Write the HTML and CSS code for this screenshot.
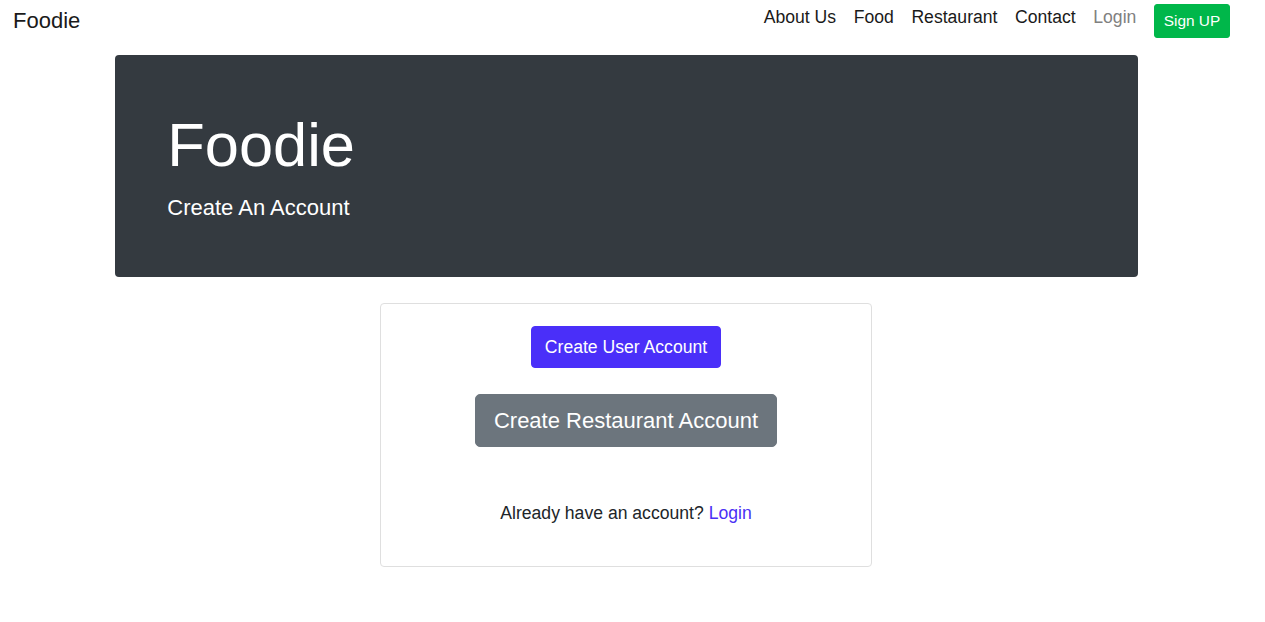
FILE: index.html
```html
<!DOCTYPE html>
<html lang="en">
<head>
<meta charset="utf-8">
<title>Foodie</title>
<link rel="stylesheet" href="styles.css">
</head>
<body>
<nav class="navbar">
  <a class="brand" href="#">Foodie</a>
  <ul class="nav">
    <li><a class="nav-link" href="#">About Us</a></li>
    <li><a class="nav-link" href="#">Food</a></li>
    <li><a class="nav-link" href="#">Restaurant</a></li>
    <li><a class="nav-link" href="#">Contact</a></li>
    <li><a class="nav-link muted" href="#">Login</a></li>
    <li><a class="btn-signup" href="#">Sign UP</a></li>
  </ul>
</nav>
<main class="page">
  <section class="jumbotron">
    <h1 class="display">Foodie</h1>
    <p class="lead">Create An Account</p>
  </section>
  <section class="card">
    <a class="btn btn-primary" href="#">Create User Account</a>
    <a class="btn btn-secondary btn-lg" href="#">Create Restaurant Account</a>
    <p class="already">Already have an account? <a class="link" href="#">Login</a></p>
  </section>
</main>
</body>
</html>
```
FILE: styles.css
```css
* { box-sizing: border-box; }
html, body { margin: 0; padding: 0; }
body {
  font-family: "Liberation Sans", Arial, sans-serif;
  font-size: 17.6px;
  line-height: 1.5;
  color: #212529;
  background: #fff;
}
a { text-decoration: none; }

.navbar {
  display: flex;
  justify-content: space-between;
  align-items: flex-start;
  padding: 4px 35px 0 13px;
  height: 38px;
}
.brand {
  font-size: 22px;
  line-height: 33px;
  color: #1a1a1a;
}
.nav {
  display: flex;
  align-items: flex-start;
  list-style: none;
  margin: 0;
  padding: 0;
}
.nav-link {
  display: block;
  padding: 0 8.8px;
  font-size: 17.6px;
  line-height: 26.4px;
  color: #1a1a1a;
}
.nav-link.muted { color: #808080; }
.btn-signup {
  display: block;
  margin-left: 8.8px;
  padding: 4.4px 8.8px;
  font-size: 15.4px;
  line-height: 23.1px;
  color: #fff;
  background: #00b74a;
  border: 1px solid #00b74a;
  border-radius: 3px;
}

.page {
  display: flex;
  flex-direction: column;
  align-items: center;
  padding-right: 13px;
}
.jumbotron {
  width: 1023px;
  margin-top: 17px;
  padding: 52.8px;
  background: #343a40;
  color: #fff;
  border-radius: 4px;
}
.display {
  margin: 0 0 8.8px;
  font-size: 61.4px;
  font-weight: 300;
  line-height: 74.4px;
}
.lead {
  margin: 0;
  font-size: 22px;
  line-height: 33px;
  font-weight: 300;
}

.card {
  width: 492px;
  margin-top: 26px;
  padding: 22px;
  border: 1px solid #dfdfdf;
  border-radius: 4px;
  display: flex;
  flex-direction: column;
  align-items: center;
}
.btn {
  display: inline-block;
  padding: 7px 13.2px;
  font-size: 17.6px;
  line-height: 26.4px;
  color: #fff;
  border: 1px solid transparent;
  border-radius: 4px;
}
.btn-primary { background: #4a2ff9; border-color: #4a2ff9; }
.btn-secondary { background: #6c757d; border-color: #6c757d; }
.btn-lg {
  margin-top: 26px;
  padding: 8.8px 17.6px;
  font-size: 22px;
  line-height: 33px;
  border-radius: 5px;
}
.already {
  margin: 53.5px 0 17.6px;
  color: #212529;
}
.link { color: #4a30f5; }
```
